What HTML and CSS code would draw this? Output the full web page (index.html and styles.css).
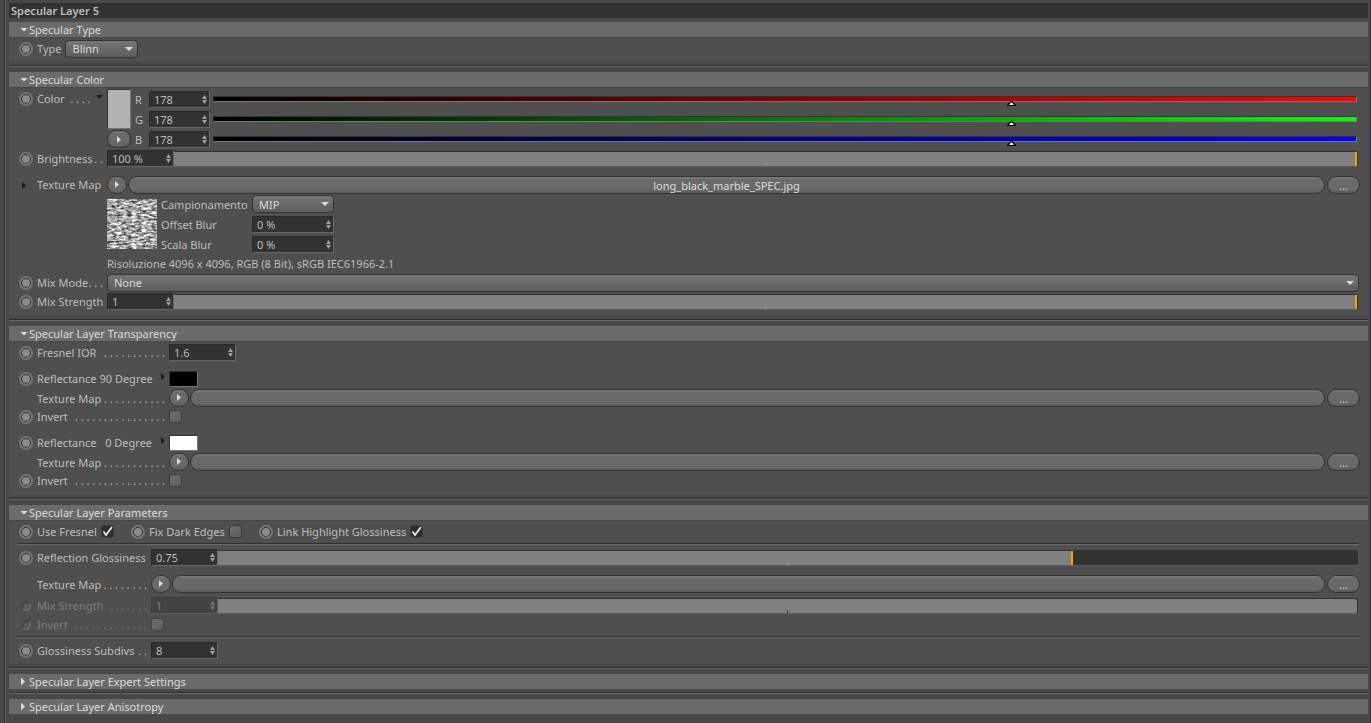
FILE: index.html
```
<!DOCTYPE html>
<html lang="en">
<head>
  <meta charset="utf-8">
  <title>Specular Layer 5</title>
  <link rel="stylesheet" href="styles.css">
</head>
<body>
  <svg class="defs" width="0" height="0" aria-hidden="true">
    <symbol id="spin" viewBox="0 0 5 9"><path d="M2.5 0L5 4H0zM0 5h5L2.500 9z" fill="#a0a0a0"/></symbol>
    <symbol id="play" viewBox="0 0 4 7"><path d="M0 0v7l4-3.500z" fill="currentColor"/></symbol>
    <symbol id="down" viewBox="0 0 7 4"><path d="M0 0h7L3.500 4z" fill="currentColor"/></symbol>
  </svg>

  <main class="panel">
    <h1>Specular Layer 5</h1>

    <details open>
      <summary>Specular Type</summary>
      <div class="body">
        <div class="row">
          <button class="dot" aria-label="Key type"></button>
          <label class="short" for="type">Type</label>
          <select id="type" class="select small"><option>Blinn</option></select>
        </div>
      </div>
    </details>

    <details open>
      <summary>Specular Color</summary>
      <div class="body color">
        <div class="color-rows">
          <div class="row">
            <button class="dot" aria-label="Key color"></button>
            <span class="label"><span>Color</span><span>. . . .</span><svg class="tri down"><use href="#down"/></svg></span>
          </div>
          <div class="swatches">
            <button class="swatch tall" aria-label="Color"></button>
            <button class="round" aria-label="Color menu"><svg><use href="#play"/></svg></button>
          </div>
          <div class="channels">
            <div class="channel">
              <label for="red">R</label>
              <span class="field"><input id="red" value="178"><svg><use href="#spin"/></svg></span>
              <input type="range" class="ramp red" value="70" aria-label="Red">
            </div>
            <div class="channel">
              <label for="green">G</label>
              <span class="field"><input id="green" value="178"><svg><use href="#spin"/></svg></span>
              <input type="range" class="ramp green" value="70" aria-label="Green">
            </div>
            <div class="channel">
              <label for="blue">B</label>
              <span class="field"><input id="blue" value="178"><svg><use href="#spin"/></svg></span>
              <input type="range" class="ramp blue" value="70" aria-label="Blue">
            </div>
          </div>
        </div>
        <div class="row">
          <button class="dot" aria-label="Key brightness"></button>
          <label class="label" for="brightness"><span>Brightness</span><span>. .</span></label>
          <span class="field"><input id="brightness" value="100 %"><svg><use href="#spin"/></svg></span>
          <input type="range" class="slider" value="100" style="--fill: 100%" aria-label="Brightness">
        </div>
        <div class="row space">
          <button class="fold" aria-label="Expand texture"><svg class="tri"><use href="#play"/></svg></button>
          <span class="label">Texture Map</span>
          <button class="round" aria-label="Texture menu"><svg><use href="#play"/></svg></button>
          <button class="pill">long_black_marble_SPEC.jpg</button>
          <button class="more">...</button>
        </div>
        <div class="texture">
          <svg class="thumb" viewBox="0 0 50 50" role="img" aria-label="Texture preview">
            <filter id="marble" x="0" y="0" width="100%" height="100%" color-interpolation-filters="sRGB">
              <feTurbulence type="fractalNoise" baseFrequency=".2 .45" numOctaves="3" seed="8"/>
              <feColorMatrix values="1.500 0 0 0 -.1  1.500 0 0 0 -.1  1.500 0 0 0 -.1  0 0 0 0 1"/>
            </filter>
            <rect width="50" height="50" filter="url(#marble)"/>
          </svg>
          <div class="sampling">
            <label for="sampling">Campionamento</label>
            <select id="sampling" class="select"><option>MIP</option></select>
            <label for="offset">Offset Blur</label>
            <span class="field"><input id="offset" value="0 %"><svg><use href="#spin"/></svg></span>
            <label for="scale">Scala Blur</label>
            <span class="field"><input id="scale" value="0 %"><svg><use href="#spin"/></svg></span>
          </div>
        </div>
        <p class="info">Risoluzione 4096 x 4096, RGB (8 Bit), sRGB IEC61966-2.1</p>
        <div class="row">
          <button class="dot" aria-label="Key mix mode"></button>
          <label class="label" for="mode"><span>Mix Mode</span><span>. . .</span></label>
          <select id="mode" class="select wide"><option>None</option></select>
        </div>
        <div class="row">
          <button class="dot" aria-label="Key mix strength"></button>
          <label class="label" for="strength">Mix Strength</label>
          <span class="field"><input id="strength" value="1"><svg><use href="#spin"/></svg></span>
          <input type="range" class="slider" value="100" style="--fill: 100%" aria-label="Mix strength">
        </div>
      </div>
    </details>

    <details open>
      <summary>Specular Layer Transparency</summary>
      <div class="body transparency">
        <div class="row">
          <button class="dot" aria-label="Key Fresnel IOR"></button>
          <label class="label" for="ior"><span>Fresnel IOR</span><span>. . . . . . . . . . .</span></label>
          <span class="field"><input id="ior" value="1.6"><svg><use href="#spin"/></svg></span>
        </div>
        <div class="row space">
          <button class="dot" aria-label="Key reflectance 90"></button>
          <span class="label"><span>Reflectance 90 Degree</span><svg class="tri"><use href="#play"/></svg></span>
          <button class="swatch black" aria-label="Reflectance 90 degree color"></button>
        </div>
        <div class="row">
          <span class="nodot"></span>
          <span class="label low"><span>Texture Map</span><span>. . . . . . . . . . .</span></span>
          <button class="round" aria-label="Texture menu"><svg><use href="#play"/></svg></button>
          <button class="pill" aria-label="Choose texture"></button>
          <button class="more">...</button>
        </div>
        <div class="row">
          <button class="dot" aria-label="Key invert"></button>
          <label class="label" for="invert90"><span>Invert</span><span>. . . . . . . . . . . . . . . .</span></label>
          <input type="checkbox" id="invert90">
        </div>
        <div class="row space">
          <button class="dot" aria-label="Key reflectance 0"></button>
          <span class="label"><span>Reflectance &nbsp; 0 Degree</span><svg class="tri"><use href="#play"/></svg></span>
          <button class="swatch white" aria-label="Reflectance 0 degree color"></button>
        </div>
        <div class="row">
          <span class="nodot"></span>
          <span class="label low"><span>Texture Map</span><span>. . . . . . . . . . .</span></span>
          <button class="round" aria-label="Texture menu"><svg><use href="#play"/></svg></button>
          <button class="pill" aria-label="Choose texture"></button>
          <button class="more">...</button>
        </div>
        <div class="row">
          <button class="dot" aria-label="Key invert"></button>
          <label class="label" for="invert0"><span>Invert</span><span>. . . . . . . . . . . . . . . .</span></label>
          <input type="checkbox" id="invert0">
        </div>
      </div>
    </details>

    <details open>
      <summary>Specular Layer Parameters</summary>
      <div class="body parameters">
        <div class="checks">
          <div class="row">
            <button class="dot" aria-label="Key use Fresnel"></button>
            <label class="short" for="fresnel">Use Fresnel</label>
            <input type="checkbox" id="fresnel" checked>
          </div>
          <div class="row">
            <button class="dot" aria-label="Key fix dark edges"></button>
            <label class="short" for="edges">Fix Dark Edges</label>
            <input type="checkbox" id="edges">
          </div>
          <div class="row">
            <button class="dot" aria-label="Key link highlight"></button>
            <label class="short" for="link">Link Highlight Glossiness</label>
            <input type="checkbox" id="link" checked>
          </div>
        </div>
        <hr>
        <div class="row">
          <button class="dot" aria-label="Key glossiness"></button>
          <label class="label" for="gloss">Reflection Glossiness</label>
          <span class="field"><input id="gloss" value="0.75"><svg><use href="#spin"/></svg></span>
          <input type="range" class="slider" value="75" style="--fill: 75%" aria-label="Reflection glossiness">
        </div>
        <div class="row space">
          <span class="nodot"></span>
          <span class="label low"><span>Texture Map</span><span>. . . . . . . .</span></span>
          <button class="round" aria-label="Texture menu"><svg><use href="#play"/></svg></button>
          <button class="pill" aria-label="Choose texture"></button>
          <button class="more">...</button>
        </div>
        <div class="row off gap">
          <button class="dot" aria-label="Key mix strength" disabled></button>
          <label class="label" for="gloss-mix"><span>Mix Strength</span><span>. . . . . . .</span></label>
          <span class="field"><input id="gloss-mix" value="1" disabled><svg><use href="#spin"/></svg></span>
          <input type="range" class="slider" value="100" style="--fill: 100%" aria-label="Mix strength" disabled>
        </div>
        <div class="row off">
          <button class="dot" aria-label="Key invert" disabled></button>
          <label class="label" for="gloss-invert"><span>Invert</span><span>. . . . . . . . . . . . .</span></label>
          <input type="checkbox" id="gloss-invert" disabled>
        </div>
        <hr>
        <div class="row">
          <button class="dot" aria-label="Key subdivs"></button>
          <label class="label" for="subdivs"><span>Glossiness Subdivs</span><span>. .</span></label>
          <span class="field"><input id="subdivs" value="8"><svg><use href="#spin"/></svg></span>
        </div>
      </div>
    </details>

    <details>
      <summary>Specular Layer Expert Settings</summary>
    </details>

    <details>
      <summary>Specular Layer Anisotropy</summary>
    </details>
  </main>
</body>
</html>
```

FILE: styles.css
```
* {
    box-sizing: border-box;
}

body {
    margin: 0;
    min-height: 100vh;
    background-color: #484848;
    border-right: 1px solid #2b343c;
    color: #bebebe;
    font: 11px/15px "Noto Sans", sans-serif;
}

button, input, select {
    margin: 0;
    padding: 0;
    border: 0;
    color: inherit;
    font: inherit;
    appearance: none;
}

.defs {
    position: absolute;
}

.panel {
    min-height: 100vh;
    margin-left: 4px;
    padding: 3px 2px 0 3px;
    border-left: 1px solid #2e2e2e;
    box-shadow: inset 1px 0 #686868;
}

h1 {
    height: 15px;
    margin: 0 0 4px 1px;
    padding-left: 2px;
    background-color: #323232;
    font-size: 11px;
    font-weight: 600;
    line-height: 16px;
}

/* sections */

details {
    margin-left: 1px;
}

details + details {
    margin-top: 3px;
    padding-top: 7px;
    background: linear-gradient(#303030 50%, #686868 50%) no-repeat 0 0 / 100% 2px;
}

summary {
    display: flex;
    align-items: center;
    height: 15px;
    padding-left: 11px;
    background-color: #6b6b6b;
    color: #dcdcdc;
    line-height: 15px;
    list-style: none;
}

summary::before {
    content: "";
    width: 9px;
    height: 4px;
    background-color: #dcdcdc;
    clip-path: polygon(0 0, 8px 0, 4px 100%);
}

details:not([open]) summary::before {
    height: 8px;
    clip-path: polygon(1px 0, 5px 50%, 1px 100%);
}

.body {
    --label: 66px;
    padding: 2px 9px 4px 10px;
    background-color: #4f4f4f;
    box-shadow: inset 0 1px #474747;
}

.color, .transparency {
    padding-bottom: 5px;
}

.transparency {
    --label: 128px;
}

.parameters {
    --label: 110px;
}

hr {
    height: 2px;
    margin: 2px 0 3px -2px;
    border: 0;
    background: linear-gradient(#303030 50%, #686868 50%);
}

/* rows */

.row {
    display: flex;
    align-items: center;
    height: 19px;
}

.checks {
    display: grid;
    grid-template-columns: 112px 128px auto;
}

.space {
    margin-top: 7px;
}

.gap {
    margin-top: 3px;
}

.label {
    display: flex;
    flex: none;
    justify-content: space-between;
    width: var(--label);
    margin: 0 4px;
    white-space: nowrap;
}

.short {
    margin: 0 4px;
    white-space: nowrap;
}

.low {
    padding-top: 2px;
}

.nodot, .fold {
    flex: none;
    width: 14px;
}

.fold {
    display: flex;
    background: none;
}

.tri {
    width: 4px;
    height: 7px;
    margin: 2px 0 0 3px;
    color: #1c1c1c;
}

.tri.down {
    width: 7px;
    height: 4px;
    margin: 4px 0 0 0;
}

.dot {
    flex: none;
    width: 14px;
    height: 14px;
    border: 2px solid #747474;
    border-radius: 50%;
    background-color: #8a8a8a;
    box-shadow: inset 0 0 0 1px #282828;
}

/* fields and drop-downs */

.field {
    display: flex;
    flex: none;
    align-items: center;
    width: 67px;
    height: 17px;
    padding-right: 2px;
    border: 1px solid #2a2a2a;
    border-right-color: #686868;
    border-bottom-color: #686868;
    background-color: #323232;
}

.field input {
    flex: 1;
    min-width: 0;
    height: 15px;
    padding-left: 4px;
    background: none;
    outline: 0;
}

.field svg {
    width: 5px;
    height: 9px;
}

.select {
    width: 82px;
    height: 18px;
    padding-left: 6px;
    border: 1px solid #343434;
    border-radius: 4px;
    background:
        url("data:image/svg+xml,%3Csvg xmlns='http://www.w3.org/2000/svg' width='8' height='4'%3E%3Cpath d='M0 0h8L4 4z' fill='%23dcdcdc'/%3E%3C/svg%3E") no-repeat right 4px center,
        linear-gradient(#767676, #5c5c5c);
    color: #dcdcdc;
    line-height: 15px;
}

.select.small {
    width: 73px;
}

.select.wide {
    flex: 1;
}

/* buttons */

.round, .pill, .more {
    height: 18px;
    border: 1px solid #333;
    border-radius: 9px;
    background: linear-gradient(#7a7a7a, #6a6a6a 3px, #686868 13px, #5a5a5a);
    color: #dcdcdc;
    line-height: 17px;
}

.round {
    display: flex;
    flex: none;
    align-items: center;
    justify-content: center;
    width: 20px;
}

.round svg {
    width: 4px;
    height: 7px;
}

.pill {
    flex: 1;
    margin: 0 2px 0 1px;
}

.more {
    flex: none;
    width: 33px;
    margin-right: -1px;
}

.swatch {
    flex: none;
    width: 29px;
    height: 16px;
    border: 1px solid #333;
    border-right-color: #777;
    border-bottom-color: #777;
}

.swatch.tall {
    width: 24px;
    height: 40px;
    background-color: #b2b2b2;
}

.black {
    background-color: #000;
}

.white {
    background-color: #fff;
}

input[type="checkbox"] {
    flex: none;
    width: 13px;
    height: 13px;
    border: 1px solid #3a3a3a;
    border-radius: 3px;
    background: linear-gradient(135deg, #707070, #5c5c5c);
}

input[type="checkbox"]:checked {
    background: #2e2e2e url("data:image/svg+xml,%3Csvg xmlns='http://www.w3.org/2000/svg' width='11' height='11'%3E%3Cpath d='M1.500 5.500L4 9L10 1' fill='none' stroke='%23e6e6e6' stroke-width='1.800'/%3E%3C/svg%3E") no-repeat center;
}

/* sliders */

.slider {
    flex: 1;
    min-width: 0;
    height: 16px;
    margin-right: 1px;
    border: 1px solid #303030;
    border-width: 1px 1px 1px 0;
    border-bottom-color: #5c5c5c;
    border-radius: 0 3px 3px 0;
    background:
        linear-gradient(#b09a6c, #b09a6c) no-repeat center bottom / 1px 3px,
        linear-gradient(#808080, #808080) no-repeat 0 0 / var(--fill) 100%,
        #323232;
}

.slider::-webkit-slider-thumb {
    width: 2px;
    height: 14px;
    background-color: #f5a300;
    appearance: none;
}

.ramp {
    flex: 1;
    min-width: 0;
    height: 6px;
    margin-right: 2px;
    border: 1px solid #333;
    border-right-color: #777;
    border-bottom-color: #777;
}

.ramp::-webkit-slider-thumb {
    width: 9px;
    height: 5px;
    margin-top: 8px;
    background: url("data:image/svg+xml,%3Csvg xmlns='http://www.w3.org/2000/svg' width='9' height='5'%3E%3Cpath d='M0 5V4L4 0h1l4 4v1z'/%3E%3Cpath d='M2 4L4 1.500h1L7 4z' fill='%23fff'/%3E%3C/svg%3E") no-repeat;
    appearance: none;
}

.red {
    background: linear-gradient(to right, #000, #f00) padding-box;
}

.green {
    background: linear-gradient(to right, #000, #0f0) padding-box;
}

.blue {
    background: linear-gradient(to right, #000, #00f) padding-box;
}

/* color */

.color-rows {
    display: flex;
}

.swatches {
    display: flex;
    flex-direction: column;
    gap: 1px;
}

.swatches .round {
    width: 24px;
}

.channels {
    flex: 1;
}

.channel {
    display: flex;
    align-items: center;
    height: 20px;
}

.channel label {
    width: 10px;
    margin: 0 4px;
}

.channel .field {
    width: 61px;
    margin-right: 3px;
}

/* texture */

.texture {
    display: flex;
    align-items: center;
    gap: 4px;
    padding-left: 88px;
}

.thumb {
    width: 50px;
    height: 50px;
}

.sampling {
    display: grid;
    grid-template-columns: 91px 82px;
    grid-auto-rows: 20px;
    align-items: center;
}

.sampling .field {
    width: auto;
}

.info {
    height: 19px;
    margin: 0;
    padding-left: 88px;
    line-height: 20px;
}

/* disabled */

.off {
    color: #7c7c7c;
}

.off .dot {
    width: 10px;
    height: 10px;
    margin: 0 2px;
    border-color: #444 #6a6a6a #6a6a6a #444;
    background-color: #606060;
    box-shadow: inset 0 0 0 1px #484848;
}

.off .field {
    border-color: #3c3c3c #5c5c5c #5c5c5c #3c3c3c;
    background-color: #434343;
}

.off .field svg {
    opacity: .5;
}

.off input[type="checkbox"] {
    border-color: #434343;
}

.off .slider {
    background:
        linear-gradient(#404040, #404040) no-repeat center bottom / 1px 3px,
        #808080;
}

.off .slider::-webkit-slider-thumb {
    background: none;
}
```
